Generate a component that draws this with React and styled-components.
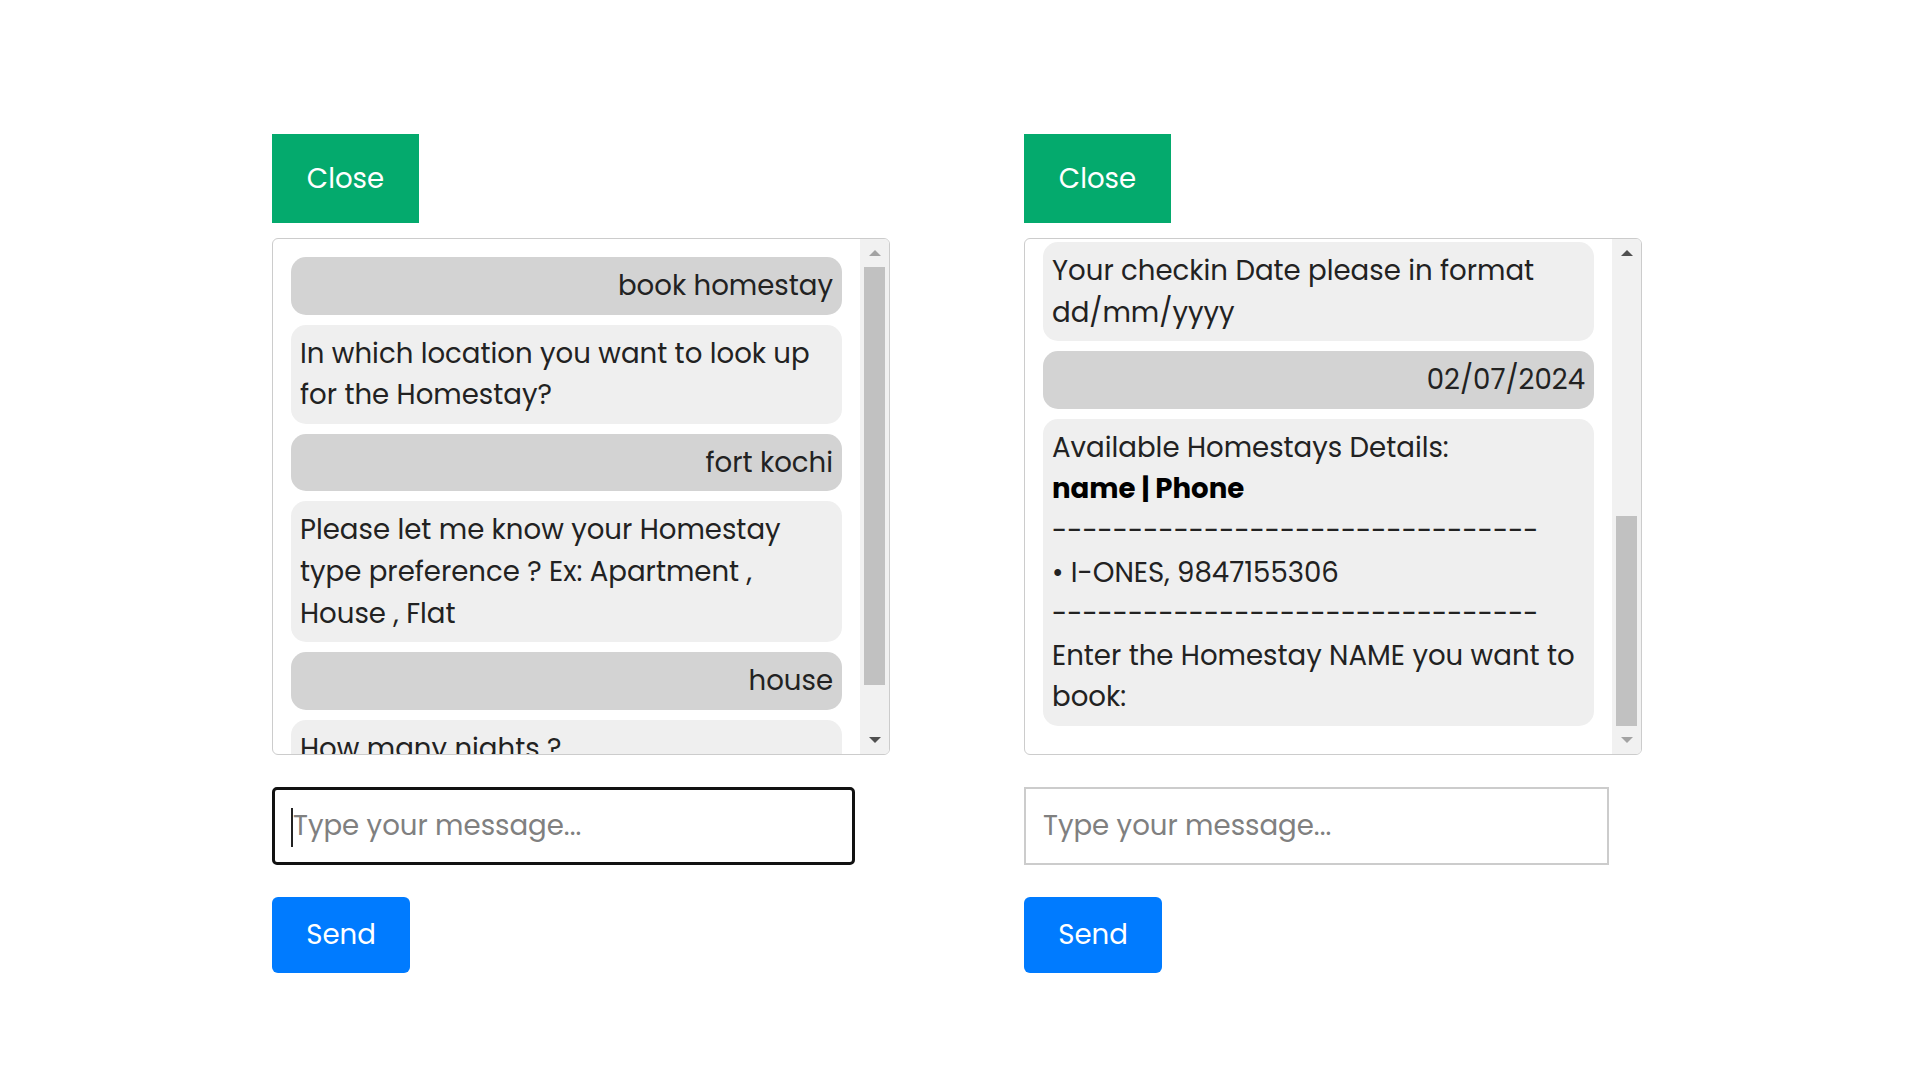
import React, { useLayoutEffect, useRef, useState } from 'react'
import styled, { createGlobalStyle } from 'styled-components'

const GlobalStyle = createGlobalStyle`
  body {
    margin: 0;
    background: #fff;
    color: #222;
    font-family: "Poppins", "Open Sans", sans-serif;
  }
`

const DASHES = '--------------------------------'

const leftChat = [
  { fromUser: true, text: 'book homestay' },
  { fromUser: false, text: 'In which location you want to look up\nfor the Homestay?' },
  { fromUser: true, text: 'fort kochi' },
  { fromUser: false, text: 'Please let me know your Homestay\ntype preference ? Ex: Apartment ,\nHouse , Flat' },
  { fromUser: true, text: 'house' },
  { fromUser: false, text: 'How many nights ?' },
]

const Page = styled.div`
  display: flex;
  gap: 134px;
  padding: 134px 0 0 272px;
  min-height: 100vh;
  box-sizing: border-box;
`

const ChatColumn = styled.div`
  width: 618px;
  display: flex;
  flex-direction: column;
  align-items: flex-start;
`

const CloseButton = styled.button`
  width: 147px;
  height: 89px;
  margin-bottom: 15px;
  border: none;
  background: #04aa6d;
  color: #fff;
  font-family: inherit;
  font-size: 27.6px;
  cursor: pointer;
`

const ChatBox = styled.div`
  display: flex;
  width: 618px;
  height: 517px;
  box-sizing: border-box;
  border: 1px solid #ccc;
  border-radius: 6px;
  overflow: hidden;
`

const ScrollArea = styled.div`
  flex: 1;
  padding: 18px;
  overflow-y: scroll;
  scrollbar-width: none;
  &::-webkit-scrollbar {
    display: none;
  }
`

const Scrollbar = styled.div`
  width: 29px;
  flex-shrink: 0;
  display: flex;
  flex-direction: column;
  background: #f1f1f1;
`

const ArrowButton = styled.div`
  height: 28px;
  flex-shrink: 0;
  display: flex;
  align-items: center;
  justify-content: center;
`

const Triangle = styled.span`
  width: 0;
  height: 0;
  border-left: 6px solid transparent;
  border-right: 6px solid transparent;
  ${(p) => (p.$down ? 'border-top' : 'border-bottom')}: 6px solid ${(p) => (p.$dim ? '#a3a3a3' : '#505050')};
`

const Track = styled.div`
  flex: 1;
  position: relative;
`

const Thumb = styled.div`
  position: absolute;
  left: 4px;
  right: 4px;
  background: #c1c1c1;
`

const Bubble = styled.div`
  margin-bottom: 10px;
  padding: 8px 9px;
  border-radius: 15px;
  font-size: 27.6px;
  line-height: 41.6px;
  white-space: pre-line;
  background: ${(p) => (p.$fromUser ? '#d3d3d3' : '#efefef')};
  text-align: ${(p) => (p.$fromUser ? 'right' : 'left')};
`

const Bold = styled.b`
  font-weight: 700;
  color: #000;
`

const rightChat = [
  ...leftChat,
  { fromUser: true, text: '2' },
  { fromUser: false, text: 'Your checkin Date please in format\ndd/mm/yyyy' },
  { fromUser: true, text: '02/07/2024' },
  {
    fromUser: false,
    text: (
      <>
        {'Available Homestays Details:\n'}
        <Bold>name | Phone</Bold>
        {'\n' + DASHES + '\n• I-ONES, 9847155306\n' + DASHES + '\n'}
        {'Enter the Homestay NAME you want to\nbook:'}
      </>
    ),
  },
]

const InputWrap = styled.div`
  position: relative;
  margin-top: 32px;
`

const MessageInput = styled.input`
  display: block;
  width: ${(p) => (p.$active ? '583px' : '585px')};
  height: 78px;
  box-sizing: border-box;
  padding: 0 17px 0 ${(p) => (p.$active ? '18px' : '17px')};
  border: ${(p) => (p.$active ? '3px solid #111' : '2px solid #ccc')};
  border-radius: ${(p) => (p.$active ? '5px' : '0')};
  outline: none;
  font-family: inherit;
  font-size: 27.6px;
  color: #222;
  &::placeholder {
    color: #808080;
  }
`

const Caret = styled.span`
  position: absolute;
  left: 19px;
  top: 21px;
  width: 2px;
  height: 39px;
  background: #222;
`

const SendButton = styled.button`
  margin-top: 32px;
  width: 138px;
  height: 76px;
  border: none;
  border-radius: 6px;
  background: #007bff;
  color: #fff;
  font-family: inherit;
  font-size: 27.6px;
  cursor: pointer;
`

const ChatWindow = ({ messages, scrollToEnd, active }) => {
  const areaRef = useRef(null)
  const [bar, setBar] = useState({ top: 0, size: 1, atTop: true, atBottom: false })

  const measure = () => {
    const el = areaRef.current
    if (!el) return
    const max = el.scrollHeight - el.clientHeight
    setBar({
      top: el.scrollTop / el.scrollHeight,
      size: el.clientHeight / el.scrollHeight,
      atTop: el.scrollTop <= 0,
      atBottom: el.scrollTop >= max - 1,
    })
  }

  useLayoutEffect(() => {
    if (scrollToEnd && areaRef.current) {
      areaRef.current.scrollTop = areaRef.current.scrollHeight
    }
    measure()
  }, [scrollToEnd])

  return (
    <ChatColumn>
      <CloseButton>Close</CloseButton>
      <ChatBox>
        <ScrollArea ref={areaRef} onScroll={measure}>
          {messages.map((m, i) => (
            <Bubble key={i} $fromUser={m.fromUser}>
              {m.text}
            </Bubble>
          ))}
        </ScrollArea>
        <Scrollbar>
          <ArrowButton>
            <Triangle $dim={bar.atTop} />
          </ArrowButton>
          <Track>
            <Thumb style={{ top: `${bar.top * 100}%`, height: `${bar.size * 100}%` }} />
          </Track>
          <ArrowButton>
            <Triangle $down $dim={bar.atBottom} />
          </ArrowButton>
        </Scrollbar>
      </ChatBox>
      <InputWrap>
        <MessageInput $active={active} placeholder="Type your message..." />
        {active && <Caret />}
      </InputWrap>
      <SendButton>Send</SendButton>
    </ChatColumn>
  )
}

const App = () => {
  return (
    <>
      <GlobalStyle />
      <Page>
        <ChatWindow messages={leftChat} active />
        <ChatWindow messages={rightChat} scrollToEnd />
      </Page>
    </>
  )
}

export default App
